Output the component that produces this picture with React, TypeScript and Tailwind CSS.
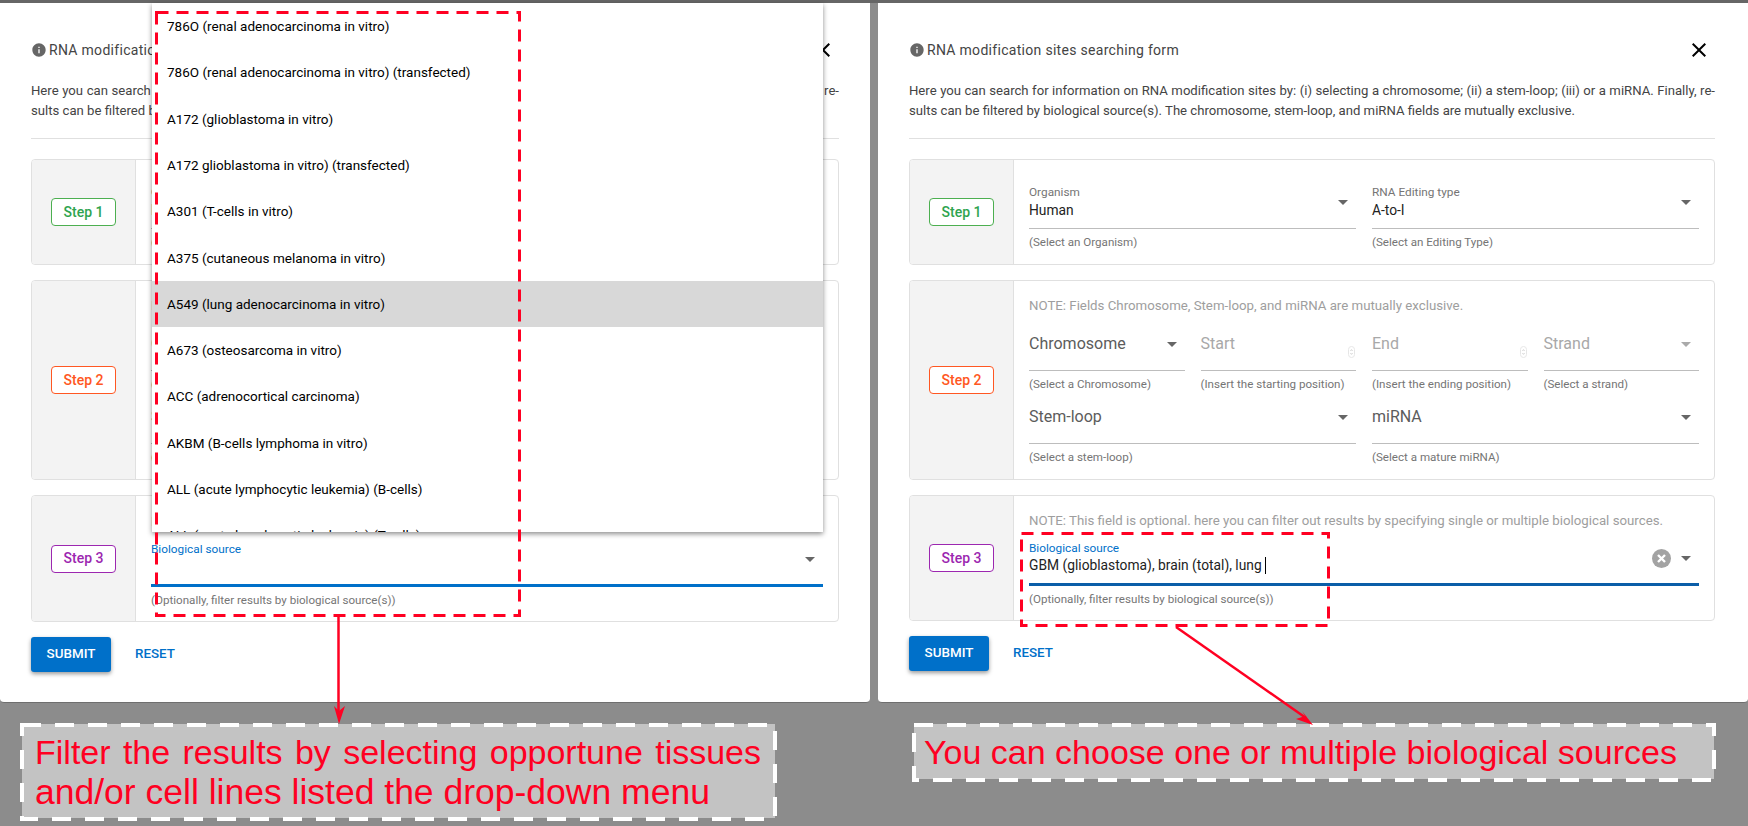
import React from "react";

const INFO = "M12 2C6.48 2 2 6.48 2 12s4.48 10 10 10 10-4.48 10-10S17.52 2 12 2zm1 15h-2v-6h2v6zm0-8h-2V7h2v2z";
const CLOSE = "M19 6.41L17.59 5 12 10.59 6.41 5 5 6.41 10.59 12 5 17.59 6.41 19 12 13.41 17.59 19 19 17.59 13.41 12z";

const MENU = [
  "786O (renal adenocarcinoma in vitro)",
  "786O (renal adenocarcinoma in vitro) (transfected)",
  "A172 (glioblastoma in vitro)",
  "A172 glioblastoma in vitro) (transfected)",
  "A301 (T-cells in vitro)",
  "A375 (cutaneous melanoma in vitro)",
  "A549 (lung adenocarcinoma in vitro)",
  "A673 (osteosarcoma in vitro)",
  "ACC (adrenocortical carcinoma)",
  "AKBM (B-cells lymphoma in vitro)",
  "ALL (acute lymphocytic leukemia) (B-cells)",
  "ALL (acute lymphocytic leukemia) (T-cells)",
];

function Arrow({ light }: { light?: boolean }) {
  return (
    <svg width="10" height="5" viewBox="0 0 10 5" className="shrink-0">
      <path d="M0 0h10L5 5z" fill={light ? "#aaaaaa" : "#666666"} />
    </svg>
  );
}

function Spin() {
  return (
    <svg width="7" height="12" viewBox="0 0 7 12" className="shrink-0 mt-[16px] -mr-[7px]">
      <rect x="0.5" y="0.5" width="6" height="11" rx="3" fill="#fff" stroke="#e6e6e6" />
      <path d="M2.4 5l1.1-1.4L4.6 5M2.4 7l1.1 1.4L4.6 7" fill="none" stroke="#bbb" strokeWidth="0.6" />
    </svg>
  );
}

function Field({
  label,
  value,
  placeholder,
  help,
  disabled,
  spin,
}: {
  label?: string;
  value?: string;
  placeholder?: string;
  help: string;
  disabled?: boolean;
  spin?: boolean;
}) {
  return (
    <div>
      <div className="flex items-center justify-between h-[44px] pb-[9px] pr-[8px] border-b border-[#bdbdbd]">
        <div className="min-w-0">
          {label && <div className="text-[11.8px] leading-[14px] text-[#757575]">{label}</div>}
          {value && <div className="text-[13.8px] leading-[20px] mt-[1px] text-[#222]">{value}</div>}
          {placeholder && (
            <div className={`text-[16px] leading-[20px] ${disabled ? "text-[#a8a8a8]" : "text-[#5c5c5c]"}`}>
              {placeholder}
            </div>
          )}
        </div>
        {spin ? <Spin /> : <Arrow light={disabled} />}
      </div>
      <div className="mt-[6px] text-[11.6px] leading-[14px] text-[#757575]">{help}</div>
    </div>
  );
}

function Note({ children }: { children: React.ReactNode }) {
  return <div className="text-[13.25px] leading-[20px] text-[#9e9e9e] mb-[11px] whitespace-nowrap">{children}</div>;
}

function Card({ step, tone, children }: { step: string; tone: string; children: React.ReactNode }) {
  return (
    <div className="flex border border-[#e0e0e0] rounded-[4px] overflow-hidden">
      <div className="w-[104px] shrink-0 bg-[#f3f3f3] border-r border-[#e0e0e0] flex items-center justify-center">
        <div className={`w-[65px] h-[28px] rounded-[4px] border bg-white flex items-center justify-center text-[14px] font-medium ${tone}`}>
          {step}
        </div>
      </div>
      <div className="flex-1 min-w-0 px-[15px]">{children}</div>
    </div>
  );
}

function Panel({ open }: { open?: boolean }) {
  return (
    <div className={`relative bg-white rounded-b-[4px] h-[700px] pt-[35px] border-b border-[#6e6e6e] ${open ? "pl-[31px] pr-[31px]" : "pl-[31px] pr-[33px]"}`}>
      <div className="flex items-center justify-between h-[24px]">
        <div className="flex items-center gap-[2px] text-[14px] text-[#444] tracking-[0.3px]">
          <svg width="16" height="16" viewBox="0 0 24 24">
            <path d={INFO} fill="#666" />
          </svg>
          <span>RNA modification sites searching form</span>
        </div>
        <svg width="24" height="24" viewBox="0 0 24 24" className="mr-[4px]">
          <path d={CLOSE} fill="#000" />
        </svg>
      </div>
      <div className="mt-[19px] text-[13.15px] leading-[20px] text-[#444]">
        <div className="text-justify [text-align-last:justify]">
          Here you can search for information on RNA modification sites by: (i) selecting a chromosome; (ii) a stem-loop; (iii) or a miRNA. Finally, re-
        </div>
        <div>sults can be filtered by biological source(s). The chromosome, stem-loop, and miRNA fields are mutually exclusive.</div>
      </div>
      <div className="mt-[17px] h-px bg-[#e0e0e0]" />
      <div className="mt-[20px] flex flex-col gap-[15px]">
        <Card step="Step 1" tone="text-[#2ea44f] border-[#4caf50]">
          <div className="pt-[25px] pb-[15px] grid grid-cols-2 gap-x-[16px]">
            <Field label="Organism" value="Human" help="(Select an Organism)" />
            <Field label="RNA Editing type" value="A-to-I" help="(Select an Editing Type)" />
          </div>
        </Card>
        <Card step="Step 2" tone="text-[#ff5722] border-[#ff5722]">
          <div className="pt-[15px] pb-[15px]">
            <Note>NOTE: Fields Chromosome, Stem-loop, and miRNA are mutually exclusive.</Note>
            <div className="grid grid-cols-4 gap-x-[16px]">
              <Field placeholder="Chromosome" help="(Select a Chromosome)" />
              <Field placeholder="Start" help="(Insert the starting position)" disabled spin />
              <Field placeholder="End" help="(Insert the ending position)" disabled spin />
              <Field placeholder="Strand" help="(Select a strand)" disabled />
            </div>
            <div className="mt-[9px] grid grid-cols-2 gap-x-[16px]">
              <Field placeholder="Stem-loop" help="(Select a stem-loop)" />
              <Field placeholder="miRNA" help="(Select a mature miRNA)" />
            </div>
          </div>
        </Card>
        <Card step="Step 3" tone="text-[#9c27b0] border-[#9c27b0]">
          <div className={open ? "pt-[16px] pb-[14px]" : "pt-[15px] pb-[14px]"}>
            <Note>NOTE: This field is optional. here you can filter out results by specifying single or multiple biological sources.</Note>
            <div className={`flex items-center justify-between h-[44px] pb-[9px] pr-[8px] border-b-[3px] ${open ? "border-[#0070c9]" : "border-[#0b5ea8]"}`}>
              <div>
                <div className="text-[11.8px] leading-[14px] text-[#0070c9]">Biological source</div>
                <div className="h-[20px] mt-[1px] flex items-center text-[13.8px] text-[#222]">
                  {!open && (
                    <>
                      <span className="whitespace-pre">GBM (glioblastoma), brain (total), lung </span>
                      <span className="w-px h-[17px] bg-black" />
                    </>
                  )}
                </div>
              </div>
              <div className="flex items-center gap-[10px]">
                {!open && (
                  <svg width="19" height="19" viewBox="0 0 19 19">
                    <circle cx="9.5" cy="9.5" r="9.5" fill="#a3a3a3" />
                    <path d="M6 6l7 7M13 6l-7 7" stroke="#fff" strokeWidth="2.4" />
                  </svg>
                )}
                <Arrow />
              </div>
            </div>
            <div className="mt-[6px] text-[11.6px] leading-[14px] text-[#757575]">
              (Optionally, filter results by biological source(s))
            </div>
          </div>
        </Card>
      </div>
      <div className="mt-[15px] flex items-center gap-[24px]">
        <div className="w-[80px] h-[35px] rounded-[3px] bg-[#0070c9] text-white text-[13.4px] font-medium flex items-center justify-center shadow-[0_2px_4px_rgba(0,0,0,0.4)]">
          SUBMIT
        </div>
        <div className="text-[#0070c9] text-[13.4px] font-medium">RESET</div>
      </div>
      {open && (
        <div className="absolute left-[152px] top-0 w-[671px] h-[529px] bg-white overflow-hidden shadow-[0_2px_5px_rgba(0,0,0,0.45)]">
          {MENU.map((m, i) => (
            <div
              key={m}
              className={`h-[46.3px] flex items-center pl-[15px] text-[13.5px] text-black ${i === 6 ? "bg-[#d8d8d8]" : ""}`}
            >
              {m}
            </div>
          ))}
        </div>
      )}
    </div>
  );
}

function Overlay() {
  return (
    <svg width="1748" height="826" viewBox="0 0 1748 826" className="absolute left-0 top-0 pointer-events-none">
      <g fill="none" stroke="#ff0022" strokeWidth="3" strokeDasharray="12 8">
        <rect x="156.5" y="12.5" width="363" height="603" />
        <rect x="1021.5" y="533.5" width="307" height="92" />
      </g>
      <g fill="none" stroke="#fff" strokeWidth="4" strokeDasharray="19 14">
        <rect x="22" y="725" width="753" height="94" />
        <rect x="914" y="725" width="800" height="55" />
      </g>
      <g stroke="#ff0022" strokeWidth="2.5" fill="#ff0022">
        <path d="M338.5 616V716" />
        <path d="M1176 627L1306 718" />
      </g>
      <path d="M339 724L334 706L339 711L345 706Z" fill="#ff0022" />
      <path d="M1313 725L1296 719L1305 716L1302 711Z" fill="#ff0022" />
    </svg>
  );
}

export default function App() {
  return (
    <div className="relative w-[1748px] h-[826px] overflow-hidden bg-[#8c8c8c] font-['Roboto',sans-serif]">
      <div className="h-[3px] bg-[#666666]" />
      <div className="flex gap-[8px]">
        <div className="w-[870px]">
          <Panel open />
          <div className="ml-[22px] mt-[21px] w-[753px] h-[94px] bg-[#c3c3c3] pl-[13px] pr-[14px] pt-[8px] font-['Liberation_Sans',Arial,sans-serif] leading-[40px] text-[#ff0022]">
            <div className="text-[34px] text-justify [text-align-last:justify]">Filter the results by selecting opportune tissues</div>
            <div className="text-[35.5px] whitespace-nowrap">and/or cell lines listed the drop-down menu</div>
          </div>
        </div>
        <div className="w-[870px]">
          <Panel />
          <div className="ml-[36px] mt-[21px] w-[800px] h-[55px] bg-[#c3c3c3] pl-[10px] pt-[8px] font-['Liberation_Sans',Arial,sans-serif] text-[34px] leading-[40px] text-[#ff0022] whitespace-nowrap">
            You can choose one or multiple biological sources
          </div>
        </div>
      </div>
      <Overlay />
    </div>
  );
}
